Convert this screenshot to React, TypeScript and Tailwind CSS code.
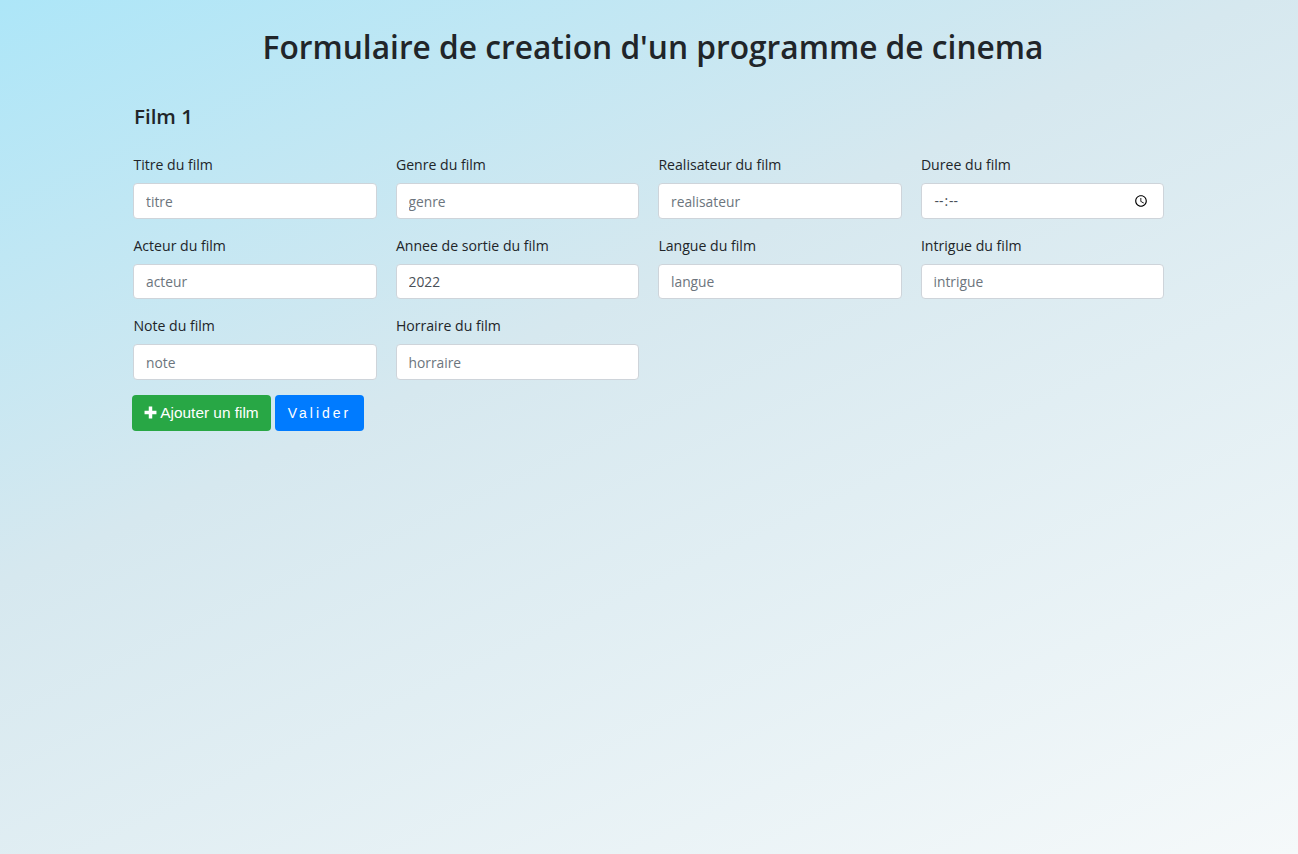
const fields = [
  { label: "Titre du film", placeholder: "titre", type: "text" },
  { label: "Genre du film", placeholder: "genre", type: "text" },
  { label: "Realisateur du film", placeholder: "realisateur", type: "text" },
  { label: "Duree du film", placeholder: "", type: "time" },
  { label: "Acteur du film", placeholder: "acteur", type: "text" },
  { label: "Annee de sortie du film", placeholder: "", type: "text", value: "2022" },
  { label: "Langue du film", placeholder: "langue", type: "text" },
  { label: "Intrigue du film", placeholder: "intrigue", type: "text" },
  { label: "Note du film", placeholder: "note", type: "text" },
  { label: "Horraire du film", placeholder: "horraire", type: "text" },
];

export default function App() {
  return (
    <div lang="fr" className="min-h-[854px] bg-[linear-gradient(155deg,#ade6f8_0%,#d6e8ef_40%,#f5f9fa_100%)] pl-[133px] pr-[134px] font-['Open_Sans',sans-serif] text-[#212529]">
      <h1 className="pt-[26px] pl-[9px] text-center text-[31.7px] leading-[42px] font-semibold">
        Formulaire de creation d'un programme de cinema
      </h1>

      <form className="pt-[34px]">
        <h4 className="pl-px text-[20.5px] leading-[28px] font-semibold">Film 1</h4>

        <div className="mt-[24px] grid grid-cols-4 gap-x-[19px] gap-y-[16px]">
          {fields.map((f) => (
            <div key={f.label}>
              <label className="mb-[8px] block pl-[0.4px] text-[14.1px] leading-[21px]">{f.label}</label>
              <input
                type={f.type}
                placeholder={f.placeholder}
                defaultValue={f.value}
                className="block h-[35.5px] w-full rounded-[4px] border border-[#ced4da] bg-white px-[12px] pt-[1px] text-[13.8px] text-[#495057] placeholder:text-[#6c757d] [&::-webkit-datetime-edit-ampm-field]:hidden [&::-webkit-datetime-edit-fields-wrapper]:tracking-[0.8px]"
              />
            </div>
          ))}
        </div>

        <div className="mt-[15px] -ml-px flex gap-[4px] font-['Liberation_Sans',sans-serif] text-white">
          <button type="button" className="flex h-[36px] w-[139px] items-center justify-center gap-[3px] rounded-[4px] bg-[#28a745] text-[15.4px]">
            <svg viewBox="0 0 12 12" className="h-[13px] w-[13px] fill-white">
              <path d="M4.4 0.5h3.2v3.9h3.9v3.2H7.6v3.9H4.4V7.6H0.5V4.4h3.9z" />
            </svg>
            Ajouter un film
          </button>
          <button type="button" className="h-[36px] w-[89px] rounded-[4px] bg-[#007bff] pt-[2px] text-[14px] tracking-[3px]">
            Valider
          </button>
        </div>
      </form>
    </div>
  );
}
